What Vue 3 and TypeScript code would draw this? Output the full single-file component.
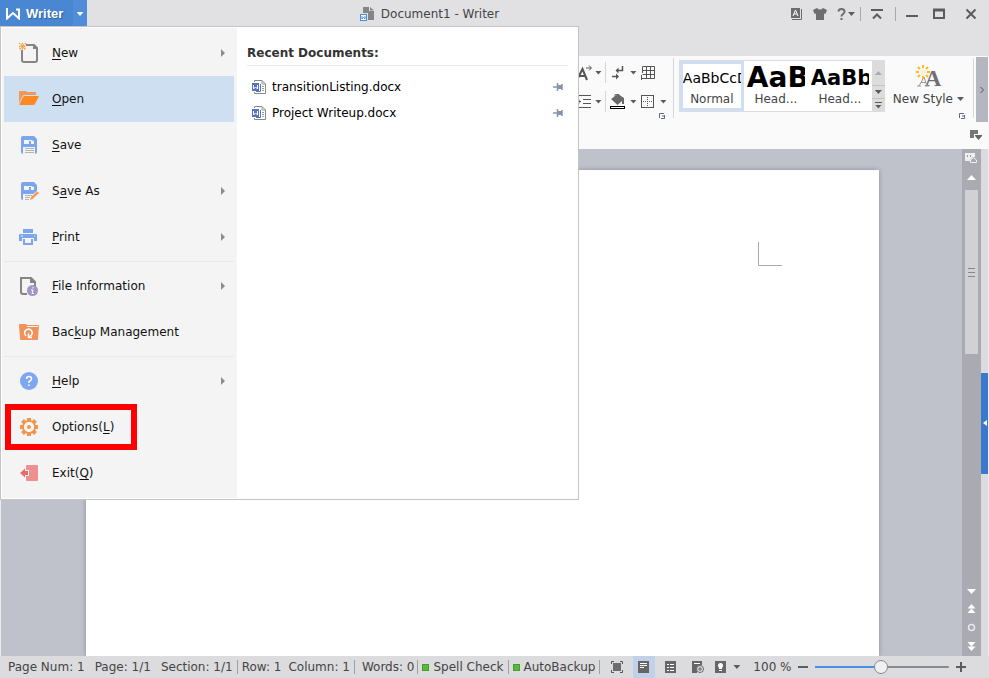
<script setup lang="ts">
import { computed, ref } from 'vue'

interface MenuEntry {
  id: string
  before: string
  key: string
  after: string
  submenu?: boolean
  divided?: boolean
}

const entries: MenuEntry[] = [
  { id: 'new', before: '', key: 'N', after: 'ew', submenu: true },
  { id: 'open', before: '', key: 'O', after: 'pen' },
  { id: 'save', before: '', key: 'S', after: 'ave' },
  { id: 'saveas', before: 'S', key: 'a', after: 've As', submenu: true },
  { id: 'print', before: '', key: 'P', after: 'rint', submenu: true },
  { id: 'info', before: '', key: 'F', after: 'ile Information', submenu: true, divided: true },
  { id: 'backup', before: 'Bac', key: 'k', after: 'up Management' },
  { id: 'help', before: '', key: 'H', after: 'elp', submenu: true, divided: true },
  { id: 'options', before: 'Options(', key: 'L', after: ')' },
  { id: 'exit', before: 'Exit(', key: 'Q', after: ')' },
]

const active = ref('open')
const recent = ['transitionListing.docx', 'Project Writeup.docx']

const styles = [
  { sample: 'AaBbCcD', name: 'Normal', size: 'body' },
  { sample: 'AaBb', name: 'Head...', size: 'h1' },
  { sample: 'AaBb', name: 'Head...', size: 'h2' },
]
const currentStyle = ref(0)

const zoom = ref(49)
const fill = computed(() => ({ '--fill': `${zoom.value}%` }))
</script>

<template>
  <div class="app">
    <header class="titlebar">
      <button class="brand">
        <span class="brand-main">
          <svg width="14" height="12" viewBox="0 0 14 12"><path d="M1 0V10.5L7 5L13 10.5V1.5H10" fill="none" stroke="#fff" stroke-width="2" /></svg>
          Writer
        </span>
        <span class="brand-drop"><i class="caret light"></i></span>
      </button>
      <h1 class="doc-title">
        <svg width="14" height="14" viewBox="0 0 14 14">
          <path d="M3 0H9V4H14V13H8V6H3Z" fill="#858585" /><path d="M10 0L14 3.500H10Z" fill="#858585" />
          <rect x="0.500" y="7.500" width="6" height="6" fill="#fff" stroke="#4a8ddc" />
          <path d="M2 9V12L3.500 10.500L5 12V9" fill="none" stroke="#4a8ddc" />
        </svg>
        Document1 - Writer
      </h1>
      <div class="controls">
        <div class="cluster tools">
          <button aria-label="Skin text"><svg width="14" height="14" viewBox="0 0 14 14"><path d="M2 1H11V11H2Z" fill="#6d6d6d" /><path d="M12.500 2V12.500H3" fill="none" stroke="#6d6d6d" /><path d="M4 9L6.500 3L9 9M5 7H8" fill="none" stroke="#fff" /></svg></button>
          <button aria-label="Skins"><svg width="14" height="14" viewBox="0 0 14 14"><path d="M0 3L4 1Q7 4 10 1L14 3L12.500 7L11 6.500V13H3V6.500L1.500 7Z" fill="#6d6d6d" /></svg></button>
          <button class="help" aria-label="Help"><svg width="10" height="14" viewBox="0 0 10 14"><path d="M1.500 4.500Q1.500 2 4.500 2Q7.500 2 7.500 4.500Q7.500 6 6 7Q4.500 8 4.500 9.500M4.500 11V13" fill="none" stroke="#6d6d6d" stroke-width="2" /></svg><i class="caret"></i></button>
        </div>
        <i class="bar"></i>
        <div class="cluster"><button aria-label="Collapse ribbon"><svg width="14" height="14" viewBox="0 0 14 14"><path d="M0 3H12M2 11.500L6 7.500L10 11.500" fill="none" stroke="#5c5c5c" stroke-width="2" /></svg></button></div>
        <i class="bar"></i>
        <div class="cluster window">
          <button aria-label="Minimize"><svg width="14" height="14" viewBox="0 0 14 14"><path d="M0 9H12" stroke="#5c5c5c" stroke-width="2" /></svg></button>
          <button aria-label="Maximize"><svg width="14" height="14" viewBox="0 0 14 14"><path d="M1 3H11V11H1Z" fill="none" stroke="#5c5c5c" stroke-width="2" /><path d="M0 3H12" stroke="#5c5c5c" stroke-width="3" /></svg></button>
          <button class="close" aria-label="Close"><svg width="14" height="14" viewBox="0 0 14 14"><path d="M1.500 2.500L10.500 11.500M10.500 2.500L1.500 11.500" stroke="#5c5c5c" stroke-width="2" /></svg></button>
        </div>
      </div>
    </header>

    <section class="ribbon">
      <div class="ribbon-row">
        <div class="format">
          <div class="tool-grid">
            <button aria-label="Grow text"><svg width="20" height="20" viewBox="0 0 20 20"><path d="M5 17L10.500 6L15 17M7 13H14" fill="none" stroke="#555" stroke-width="2" /><path d="M14 5H19M17 2.500L19.500 5L17 7.500" fill="none" stroke="#555" /></svg><i class="caret"></i></button>
            <i class="bar soft"></i>
            <button aria-label="Line breaks"><svg width="20" height="20" viewBox="0 0 20 20"><path d="M15.500 3V7.500H10M5 13.500H10" fill="none" stroke="#555" stroke-width="1.500" /><path d="M11.500 4.500V10.500L8.500 7.500ZM9 10.500V16.500L12 13.500Z" fill="#555" /></svg><i class="caret"></i></button>
            <button aria-label="Table"><svg width="20" height="20" viewBox="0 0 20 20"><path d="M5.500 3.500H17.500V15.500H8.500M5.500 3.500V10M4.500 12V17M5.500 7.500H17.500M5.500 11.500H17.500M9.500 3.500V15.500M13.500 3.500V15.500M4.500 15.500H9" fill="none" stroke="#555" /></svg></button>
            <button aria-label="Line spacing"><svg width="20" height="20" viewBox="0 0 20 20"><path d="M6 3.500H19M11 7.500H19M11 11.500H19M6 15.500H19M5 9.500H9M7 7.500V11.500" fill="none" stroke="#555" /></svg><i class="caret"></i></button>
            <i class="bar soft"></i>
            <button aria-label="Shading"><svg width="20" height="20" viewBox="0 0 20 20"><path d="M4 7L11 2L17 6V12H15V9L10.500 13Z" fill="#686868" /><path d="M8 5V2.500H12V6" fill="none" stroke="#686868" /><rect x="3.500" y="14.500" width="14" height="2" fill="#fff" stroke="#000" /></svg><i class="caret"></i></button>
            <button aria-label="Borders"><svg width="20" height="20" viewBox="0 0 20 20"><rect x="4.500" y="3.500" width="12" height="12" fill="none" stroke="#555" /><path d="M6 9.500H15M10.500 5V14" stroke="#555" stroke-dasharray="1 1" /></svg><i class="caret"></i></button>
          </div>
          <button class="launcher" aria-label="Paragraph settings"><svg width="6" height="6" viewBox="0 0 6 6"><path d="M0.500 5V0.500H5M5.500 2V5.500H2M3 3H5" fill="none" stroke="#5d6b8c" /></svg></button>
        </div>
        <i class="bar soft group"></i>
        <div class="gallery">
          <button v-for="(s, i) in styles" :key="i" class="style-cell" :class="{ chosen: i === currentStyle }" @click="currentStyle = i">
            <span class="sample" :class="s.size">{{ s.sample }}</span>
            <span class="style-name">{{ s.name }}</span>
          </button>
          <div class="gallery-nav">
            <button aria-label="Previous styles"><i class="caret up"></i></button>
            <button aria-label="Next styles"><i class="caret"></i></button>
            <button class="more" aria-label="All styles"><i class="caret"></i></button>
          </div>
        </div>
        <div class="new-style">
          <button class="new-style-btn">
            <svg width="28" height="26" viewBox="0 0 28 26">
              <text x="19" y="22" font-family="Liberation Serif, serif" font-size="23" font-weight="bold" text-anchor="middle" fill="#707070">A</text>
              <path d="M5 22L10 13L13 22M7 18.500H12M3 22H7M11 22H15" fill="none" stroke="#999" />
              <circle cx="9" cy="8" r="3" fill="#fdf3d0" />
              <path d="M9 1V4M9 12V15M2 8H5M13 8H16M4 3L6 5M12 11L14 13M14 3L12 5M6 11L4 13" stroke="#fbb829" stroke-width="2" />
            </svg>
            <span class="new-style-label">New Style <i class="caret"></i></span>
          </button>
          <button class="launcher" aria-label="Style settings"><svg width="6" height="6" viewBox="0 0 6 6"><path d="M0.500 5V0.500H5M5.500 2V5.500H2M3 3H5" fill="none" stroke="#5d6b8c" /></svg></button>
        </div>
        <i class="bar soft group end"></i>
        <button class="ribbon-next" aria-label="More commands"><svg width="4" height="8" viewBox="0 0 4 8"><path d="M0.500 1L3.500 4L0.500 7" fill="none" stroke="#555" /></svg></button>
      </div>
      <div class="doc-tabs">
        <button aria-label="Tab list"><svg width="12" height="11" viewBox="0 0 12 11"><path d="M0 0H8V4H4V8H0Z" fill="#777" /><path d="M5 5H12V6L8.500 10L5 6Z" fill="#666" /></svg></button>
      </div>
    </section>

    <main class="workspace">
      <div class="canvas"><article class="page"><div class="crop"></div></article></div>
      <div class="scroll">
        <svg width="13" height="12" viewBox="0 0 13 12"><path d="M0 0H10V4H8L5 7V8H0Z" fill="#eee" /><path d="M2.500 2V4M5.500 2V4" stroke="#999" /><path d="M8.500 4.500L11.500 7V9.500H5.500V7Z" fill="#aaaab2" stroke="#eee" /></svg>
        <svg class="up" width="9" height="5" viewBox="0 0 9 5"><path d="M0 5L4.500 0L9 5Z" fill="#fff" /></svg>
        <div class="thumb"><i></i><i></i><i></i></div>
        <div class="nav">
          <svg width="9" height="5" viewBox="0 0 9 5"><path d="M0 0L4.500 5L9 0Z" fill="#fff" /></svg>
          <svg width="9" height="9" viewBox="0 0 9 9"><path d="M0.500 4.500L4.500 0L8.500 4.500ZM0.500 9L4.500 4.500L8.500 9Z" fill="#fff" /></svg>
          <svg width="9" height="9" viewBox="0 0 9 9"><circle cx="4.500" cy="4.500" r="3" fill="none" stroke="#e8e8e8" stroke-width="1.500" /></svg>
          <svg width="9" height="9" viewBox="0 0 9 9"><path d="M0.500 0L4.500 4.500L8.500 0ZM0.500 4.500L4.500 9L8.500 4.500Z" fill="#fff" /></svg>
        </div>
      </div>
      <div class="side"><button aria-label="Open task pane"><svg width="4" height="6" viewBox="0 0 4 6"><path d="M4 0V6L0 3Z" fill="#fff" /></svg></button></div>
    </main>

    <footer class="status">
      <div class="cell wide"><span>Page Num: 1</span><span>Page: 1/1</span><span>Section: 1/1</span></div>
      <div class="cell"><span>Row: 1</span><span>Column: 1</span></div>
      <div class="cell words"><span>Words: 0</span></div>
      <button class="cell check"><i class="led"></i>Spell Check</button>
      <button class="cell check"><i class="led"></i>AutoBackup</button>
      <div class="views">
        <button aria-label="Full screen"><svg width="12" height="12" viewBox="0 0 12 12"><rect x="2" y="2" width="8" height="8" fill="#6d6d6d" /><path d="M0.500 3V0.500H3M9 0.500H11.500V3M11.500 9V11.500H9M3 11.500H0.500V9" fill="none" stroke="#555" /></svg></button>
        <button class="on" aria-label="Print layout"><svg width="12" height="12" viewBox="0 0 12 12"><rect width="11" height="12" fill="#666" /><path d="M2 2.500H9M2 4.500H9M2 6.500H6" stroke="#fff" /></svg></button>
        <button aria-label="Outline"><svg width="12" height="12" viewBox="0 0 12 12"><rect width="11" height="12" fill="#666" /><path d="M2 3.500H4M5 3.500H9M2 6.500H4M5 6.500H9M2 9.500H4M5 9.500H9" stroke="#fff" /></svg></button>
        <button aria-label="Web layout"><svg width="12" height="12" viewBox="0 0 12 12"><path d="M0 0H10V4L5 6V12H0Z" fill="#666" /><path d="M2 2.500H8" stroke="#fff" /><circle cx="8" cy="8" r="3.500" fill="#ddd" stroke="#666" /><path d="M6 8H10M8 6V10" stroke="#666" /></svg></button>
        <button class="eye" aria-label="Eye protection"><svg width="12" height="12" viewBox="0 0 12 12"><rect width="11" height="12" fill="#666" /><circle cx="5.500" cy="4.500" r="2.500" fill="#fff" /><path d="M4 6H7V8H4ZM4 9H7V10H4Z" fill="#fff" /></svg><i class="caret"></i></button>
      </div>
      <div class="zoom">
        <label for="zoom">100 %</label>
        <button aria-label="Zoom out"><svg width="10" height="10" viewBox="0 0 10 10"><path d="M0 5H10" stroke="#5c5c5c" stroke-width="2" /></svg></button>
        <input id="zoom" v-model.number="zoom" type="range" min="0" max="100" :style="fill">
        <button aria-label="Zoom in"><svg width="10" height="10" viewBox="0 0 10 10"><path d="M0 5H10M5 0V10" stroke="#5c5c5c" stroke-width="2" /></svg></button>
      </div>
    </footer>

    <div class="menu">
      <nav class="menu-list">
        <template v-for="e in entries" :key="e.id">
          <hr v-if="e.divided">
          <button class="entry" :class="{ active: active === e.id, marked: e.id === 'options' }" @mouseenter="active = e.id">
            <svg width="20" height="20" viewBox="0 0 20 20">
              <template v-if="e.id === 'new'">
                <path d="M7 2H15L18 5V17Q18 19 16 19H5Q3 19 3 17V7" fill="none" stroke="#858585" stroke-width="2" />
                <path d="M14 1L19 6H14Z" fill="#858585" />
                <path d="M0 0L7 7M7 0L0 7M3.500 0V7M0 3.500H7" stroke="#f69a3c" stroke-width="1.500" stroke-dasharray="1.500 1" />
              </template>
              <template v-else-if="e.id === 'open'">
                <path d="M0 3Q0 2 1 2H7L8 3H16Q17 3 17 4V6H5Q4 6 3 8L0 14Z" fill="#f0985a" />
                <path d="M6 7H20L16 15Q15.500 16 14 16H1Q0 16 0.500 15L4 8Q5 7 6 7Z" fill="#fb8822" />
              </template>
              <template v-else-if="e.id === 'save'">
                <path d="M2 3Q2 1 4 1H15L18 4V17Q18 19 16 19V12H4V19Q2 19 2 17Z" fill="#7ba5ee" />
                <path d="M5 5H12L15 6V9H5Z" fill="#f4f4f4" /><path d="M10 6H12V9H10Z" fill="#7ba5ee" />
                <path d="M6 13.500H15M6 15.500H15M6 17.500H15" stroke="#b3b3b3" />
              </template>
              <template v-else-if="e.id === 'saveas'">
                <path d="M2 3Q2 1 4 1H15L18 4V10L14 13H4V19Q2 19 2 17Z" fill="#7ba5ee" />
                <path d="M5 5H12L15 6V9H5Z" fill="#f4f4f4" /><path d="M10 6H12V9H10Z" fill="#7ba5ee" />
                <path d="M6 14.500H13M6 16.500H11M6 18.500H10" stroke="#b3b3b3" />
                <path d="M11 19L12 16L18 10.500L20 12L13.500 18Z" fill="#f39a56" />
              </template>
              <template v-else-if="e.id === 'print'">
                <path d="M4 2H14V6H4ZM0 8Q0 7 1 7H17Q18 7 18 8V14H15V11H3V14H0Z" fill="#7ba5ee" />
                <path d="M5 12V17H13V12" fill="none" stroke="#7ba5ee" stroke-width="2" />
                <path d="M2 9H4M15 9H16" stroke="#f4f4f4" />
              </template>
              <template v-else-if="e.id === 'info'">
                <path d="M8 18H4Q2 18 2 16V2H12L16 6V10" fill="none" stroke="#858585" stroke-width="2" />
                <path d="M11 1L17 7H11Z" fill="#858585" />
                <circle cx="13.500" cy="14.500" r="5.500" fill="#a294c4" />
                <path d="M14 11V12.500M12 14H14L13 17.500H15" fill="none" stroke="#fff" />
              </template>
              <template v-else-if="e.id === 'backup'">
                <path d="M0 3Q0 2 1 2H7L8 3H19Q20 3 20 4L19 17Q19 18 18 18H2Q1 18 1 17Z" fill="#f0935a" />
                <path d="M8 4.500H19" stroke="#f4f4f4" />
                <path d="M7 14Q4.500 11 6.500 8.500Q9 6 12 8Q14.500 11 12 13.500L10 15M9.500 11.500V15.500H13" fill="none" stroke="#fff" stroke-width="1.500" />
              </template>
              <template v-else-if="e.id === 'help'">
                <circle cx="10" cy="10" r="9" fill="#7fa6f0" />
                <path d="M7.500 8Q7.500 5.500 10 5.500Q12.500 5.500 12.500 8Q12.500 9.500 10 10.500V12M10 13.500V15" fill="none" stroke="#fff" stroke-width="1.500" />
              </template>
              <template v-else-if="e.id === 'options'">
                <circle cx="10" cy="10" r="6" fill="none" stroke="#f0954b" stroke-width="2" />
                <path d="M10 1V4M10 16V19M1 10H4M16 10H19M3.500 3.500L6 6M14 14L16.500 16.500M16.500 3.500L14 6M6 14L3.500 16.500" stroke="#f0954b" stroke-width="4" />
                <circle cx="10" cy="10" r="5" fill="#f4f4f4" />
                <circle cx="10" cy="10" r="2" fill="#f0954b" />
              </template>
              <template v-else>
                <path d="M7 3Q7 2 8 2H18Q19 2 19 3V17Q19 18 18 18H8Q7 18 7 17V13H10V7H7Z" fill="#ee9090" />
                <path d="M1 10L6 5.500V8H9V12H6V14.500Z" fill="#e96b6b" />
              </template>
            </svg>
            <span class="entry-label">{{ e.before }}<u>{{ e.key }}</u>{{ e.after }}</span>
            <svg v-if="e.submenu" width="4" height="8" viewBox="0 0 4 8"><path d="M0 0L4 4L0 8Z" fill="#8c8c8c" /></svg>
          </button>
        </template>
      </nav>
      <section class="recent">
        <h2>Recent Documents:</h2>
        <ul>
          <li v-for="name in recent" :key="name">
            <a href="#">
              <svg width="14" height="14" viewBox="0 0 14 14">
                <path d="M2.500 2V0.500H10L13.500 4V13.500H2.500V12" fill="#fff" stroke="#888" />
                <path d="M10 0.500V4H13.500M10 6.500H12M10 8.500H12M10 10.500H12" fill="none" stroke="#999" />
                <rect y="3" width="7" height="8" fill="#5674bd" /><path d="M1.500 5V9L3.500 7L5.500 9V5" fill="none" stroke="#fff" /><path d="M8.500 4V11.500H4" fill="none" stroke="#5674bd" />
              </svg>
              {{ name }}
            </a>
            <button :aria-label="`Pin ${name}`"><svg width="10" height="8" viewBox="0 0 10 8"><path d="M0 4H5M4.500 0V8M9 1V7" stroke="#8796ad" stroke-width="1.500" /><path d="M5 2H9V6H5Z" fill="#8796ad" /></svg></button>
          </li>
        </ul>
      </section>
    </div>
  </div>
</template>

<style>
body {
  margin: 0;
}
</style>

<style scoped>
.app {
  position: relative;
  display: flex;
  flex-direction: column;
  min-height: 100vh;
  overflow: hidden;
  background: #e1e1e3;
  color: #444;
  font: 12px/16px "DejaVu Sans", sans-serif;
}
.app * {
  box-sizing: border-box;
}
button {
  display: flex;
  align-items: center;
  padding: 0;
  border: 0;
  background: none;
  color: inherit;
  font: inherit;
}
svg {
  display: block;
  flex: none;
}
.caret {
  flex: none;
  width: 7px;
  height: 4px;
  margin: 0 -1px;
  background: #5c5c5c;
  clip-path: polygon(0 0, 100% 0, 50% 100%);
}
.caret.light {
  background: #fff;
}
.caret.up {
  background: #aaa;
  clip-path: polygon(0 100%, 100% 100%, 50% 0);
}
.bar {
  flex: none;
  width: 1px;
  height: 14px;
  background: #a8a8aa;
}
.bar.soft {
  height: 21px;
  background: #d6d6d6;
}

.titlebar {
  display: flex;
  align-items: flex-start;
  height: 56px;
}
.brand {
  width: 87px;
  height: 26px;
  background: #4a87d3;
  color: #fff;
  font: bold 13px/16px "Liberation Sans", sans-serif;
  text-shadow: 1px 1px 1px #2d5c99;
}
.brand-main {
  display: flex;
  flex: 1;
  align-items: center;
  gap: 6px;
  height: 100%;
  padding: 2px 0 0 6px;
}
.brand-drop {
  display: flex;
  align-items: center;
  justify-content: center;
  width: 14px;
  height: 100%;
  padding-top: 2px;
  background: #4f8cda;
}
.doc-title {
  display: flex;
  flex: 1;
  align-items: center;
  justify-content: center;
  gap: 7px;
  height: 27px;
  margin: 0;
  font-size: 12px;
  font-weight: normal;
}
.controls {
  display: flex;
  align-items: center;
  height: 28px;
  padding-left: 17px;
}
.cluster {
  display: flex;
  padding: 0 10px;
}
.cluster.tools {
  gap: 10px;
  padding: 0 6px 0 0;
}
.help {
  gap: 2px;
}
.cluster.window {
  gap: 13px;
}
.close {
  padding-left: 5px;
}

.ribbon {
  background: #fafafa;
}
.ribbon-row {
  display: flex;
  justify-content: flex-end;
  height: 66px;
}
.format,
.new-style {
  display: flex;
  flex-direction: column;
  align-items: flex-end;
  justify-content: space-between;
}
.format {
  width: 100px;
  padding: 6px 0 3px;
}
.tool-grid {
  display: grid;
  grid-template-columns: 33px 1px 30px 36px;
  grid-template-rows: 21px 21px;
  row-gap: 8px;
}
.tool-grid button {
  gap: 4px;
}
.tool-grid .bar + button,
.tool-grid .bar + button + button {
  padding-left: 1px;
}
.launcher {
  margin-right: 7px;
}
.bar.group {
  height: 60px;
  margin: 2px 5px 0 1px;
}
.bar.group.end {
  margin: 2px 2px 0 8px;
}
.gallery {
  display: flex;
  height: 52px;
  margin-top: 4px;
  border: 1px solid #dcdcdc;
  border-right: 0;
  background: #fff;
}
.style-cell {
  flex-direction: column;
  align-items: stretch;
  width: 64px;
  border: 3px solid transparent;
  overflow: hidden;
}
.style-cell.chosen {
  border-color: #d0def5;
}
.sample {
  height: 27px;
  overflow: hidden;
  color: #000;
  line-height: 28px;
  text-align: left;
  white-space: nowrap;
}
.sample.body {
  font-size: 14px;
}
.sample.h1 {
  font-size: 28px;
  font-weight: bold;
}
.sample.h2 {
  font-size: 21px;
  font-weight: bold;
}
.style-name {
  text-align: center;
}
.gallery-nav {
  display: grid;
  grid-template-rows: repeat(3, 1fr);
  row-gap: 1px;
  width: 13px;
  background: #c4c4c4;
}
.gallery-nav button {
  justify-content: center;
  background: #dcdcdc;
}
.gallery-nav .more {
  flex-direction: column;
  gap: 2px;
}
.gallery-nav .more::before {
  width: 7px;
  height: 1px;
  background: #5c5c5c;
  content: "";
}
.new-style {
  padding: 8px 0 3px 8px;
}
.new-style-btn {
  flex-direction: column;
  gap: 1px;
  margin-right: 2px;
}
.new-style-label {
  display: flex;
  align-items: center;
  gap: 5px;
}
.new-style .launcher {
  margin-right: 0;
}
.ribbon-next {
  justify-content: center;
  width: 12px;
  margin: 1px 1px 0 0;
  background: #b4b7c0;
}
.doc-tabs {
  display: flex;
  align-items: center;
  justify-content: flex-end;
  height: 27px;
  padding-right: 7px;
}

.workspace {
  display: flex;
  flex: 1;
  border: 0 solid #ececec;
  border-width: 0 1px;
  background: #bfc2cb;
}
.canvas {
  display: flex;
  flex: 1;
  justify-content: center;
  padding: 21px 0 0 2px;
}
.page {
  width: 793px;
  padding: 72px 97px;
  background: #fff;
  box-shadow: 0 0 5px #8c8e99;
}
.crop {
  width: 24px;
  height: 24px;
  margin-left: auto;
  border: solid #aaa;
  border-width: 0 0 1px 1px;
}
.scroll {
  display: flex;
  flex-direction: column;
  align-items: center;
  width: 19px;
  padding: 4px 0 5px;
  background: #aaaab2;
}
.up {
  margin: 10px 0;
}
.thumb {
  display: flex;
  flex-direction: column;
  align-items: center;
  justify-content: center;
  gap: 3px;
  width: 13px;
  height: 164px;
  background: #d0d0d5;
}
.thumb i {
  width: 7px;
  height: 1px;
  background: #888;
}
.nav {
  display: flex;
  flex-direction: column;
  gap: 10px;
  margin-top: auto;
}
.side {
  display: flex;
  align-items: center;
  width: 7px;
  background: #dcdce0;
}
.side button {
  justify-content: center;
  width: 7px;
  height: 101px;
  margin-top: 41px;
  background: #3b79cc;
}

.status {
  display: flex;
  align-items: center;
  height: 22px;
  background: #dcdcde;
  white-space: nowrap;
}
.cell {
  display: flex;
  align-items: center;
  gap: 7px;
  height: 14px;
  padding: 0 4px;
  border-right: 1px solid #a0a0a0;
}
.cell.wide {
  gap: 10px;
  padding-left: 8px;
}
.cell.words {
  padding: 0 3px 0 7px;
}
.cell.check {
  gap: 4px;
}
.led {
  width: 7px;
  height: 7px;
  border: 1px solid #3fa02a;
  background: #5cb83c;
}
.views {
  display: flex;
  gap: 5px;
  height: 100%;
  margin-left: 6px;
}
.views button {
  justify-content: center;
  width: 22px;
}
.views .eye {
  gap: 7px;
  width: 26px;
}
.views .on {
  background: #c3d1e8;
}
.zoom {
  display: flex;
  flex: 1;
  align-items: center;
  gap: 7px;
  margin-left: 13px;
  padding-right: 23px;
}
.zoom input {
  flex: 1;
  min-width: 40px;
  height: 14px;
  margin: 0;
  appearance: none;
  background: linear-gradient(to right, #4a90e2 var(--fill), #888a92 var(--fill)) center / 100% 2px no-repeat;
}
.zoom input::-webkit-slider-thumb {
  width: 14px;
  height: 14px;
  appearance: none;
  border: 1px solid #888;
  border-radius: 50%;
  background: #f0f0f0;
}

.menu {
  position: absolute;
  top: 26px;
  left: 0;
  display: flex;
  width: 579px;
  padding: 1px;
  border: 1px solid #c4c4c6;
  background: #fff;
  color: #111;
}
.menu-list {
  width: 235px;
  padding: 2px 3px 2px 2px;
  background: #f4f4f4;
}
.menu-list hr {
  height: 1px;
  margin: 1px 0;
  border: 0;
  background: #e9e9e9;
}
.entry {
  position: relative;
  gap: 13px;
  width: 100%;
  height: 46px;
  padding: 0 9px 0 15px;
}
.entry.active {
  background: #cedff1;
}
.entry.marked::after {
  position: absolute;
  top: 0;
  bottom: 0;
  left: 1px;
  box-sizing: border-box;
  width: 132px;
  border: 6px solid #f00;
  content: "";
}
.entry-label {
  flex: 1;
  text-align: left;
}
.entry-label u {
  text-underline-offset: 2px;
}
.recent {
  flex: 1;
  padding: 15px 9px 0 10px;
}
.recent h2 {
  margin: 0 0 8px;
  padding: 2px 0 4px;
  border-bottom: 1px solid #e8e8e8;
  color: #333;
  font-size: 12px;
  line-height: 16px;
}
.recent ul {
  margin: 0;
  padding: 0;
  list-style: none;
}
.recent li {
  display: flex;
  align-items: center;
  justify-content: space-between;
  height: 26px;
  padding: 0 5px;
}
.recent a {
  display: flex;
  align-items: center;
  gap: 6px;
  color: #000;
  text-decoration: none;
}
</style>
